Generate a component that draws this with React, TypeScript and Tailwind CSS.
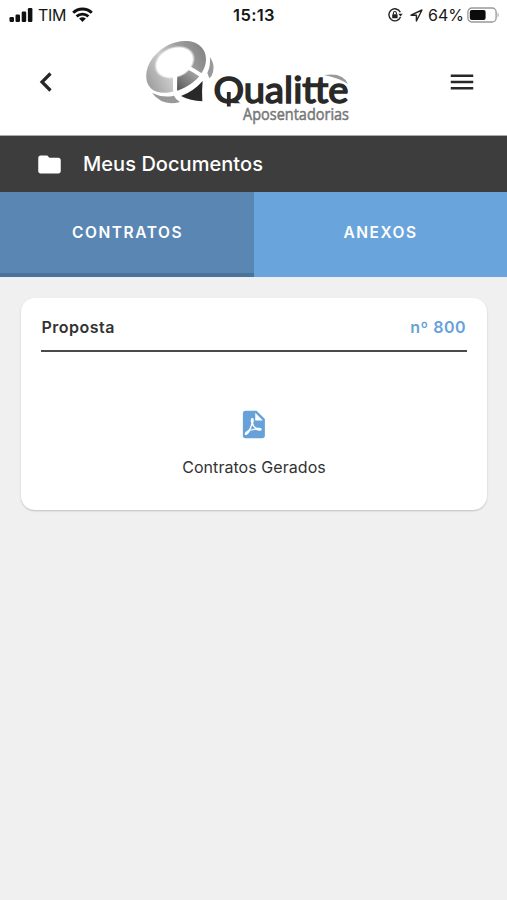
import { MdFolder, MdMenu } from "react-icons/md";

function StatusBar() {
  return (
    <div className="flex h-[30px] items-center justify-between pl-[9px] pr-[7px] text-[16px] text-[#161616]">
      <div className="flex w-[160px] items-center">
        <svg width="24" height="16" viewBox="0 0 24 16" fill="#111">
          <rect x="0.5" y="10" width="4.5" height="5" rx="1.2" />
          <rect x="6.5" y="7.5" width="4.5" height="7.5" rx="1.2" />
          <rect x="12.7" y="4.5" width="4.5" height="10.5" rx="1.2" />
          <rect x="18.9" y="1" width="4.5" height="14" rx="1.2" />
        </svg>
        <span className="ml-[5px] tracking-[-0.3px]">TIM</span>
        <svg className="ml-[6px]" width="21" height="16" viewBox="0 0 21 16" fill="none" stroke="#111" strokeWidth="2.9">
          <path d="M1.2 5.8C6.4 .8 14.6 .8 19.8 5.8" />
          <path d="M4.6 9.4C8 6.3 13 6.3 16.4 9.4" />
          <path d="M7.1 11.5Q10.5 9 13.9 11.5L10.5 15Z" fill="#111" stroke="none" />
        </svg>
      </div>
      <span className="mr-[1px] text-[16.5px] font-semibold tracking-[0.35px]">15:13</span>
      <div className="flex w-[160px] items-center justify-end">
        <svg width="15" height="14" viewBox="0 0 15 14" fill="none" stroke="#222" strokeWidth="1.4">
          <path d="M12.3 4.2A6 6 0 1 0 12.5 9" />
          <path d="M10.3 5.7h4.4l-2.2 2.8z" fill="#222" stroke="none" />
          <rect x="4.2" y="6.3" width="5.4" height="4" rx=".5" fill="#222" stroke="none" />
          <path d="M5.4 6.5V5a1.5 1.5 0 0 1 3 0v1.5" strokeWidth="1.1" />
        </svg>
        <svg className="ml-[7px]" width="13" height="13" viewBox="0 0 13 13" fill="none" stroke="#222" strokeWidth="1.4" strokeLinejoin="round">
          <path d="M12 1L1 6.2H6.4V12Z" />
        </svg>
        <span className="ml-[5px]">64%</span>
        <svg className="ml-[3px]" width="33" height="16" viewBox="0 0 33 16">
          <rect x=".9" y="1" width="28.2" height="14" rx="4" fill="none" stroke="#999" strokeWidth="1.3" />
          <rect x="2.8" y="2.9" width="15.8" height="10.2" rx="2" fill="#0c0c0c" />
          <path d="M30.6 5.3Q32.6 8 30.6 10.7Z" fill="#999" />
        </svg>
      </div>
    </div>
  );
}

function Logo() {
  return (
    <svg width="215" height="95" viewBox="140 35 215 95">
      <defs>
        <linearGradient id="orb" x1="0" y1=".7" x2="1" y2=".25">
          <stop offset="0" stopColor="#a2a2a2" />
          <stop offset=".35" stopColor="#cecece" />
          <stop offset=".65" stopColor="#a0a0a0" />
          <stop offset="1" stopColor="#858585" />
        </linearGradient>
        <linearGradient id="wedge" x1="0" y1="1" x2="1" y2="0">
          <stop offset="0" stopColor="#555" />
          <stop offset="1" stopColor="#bbb" />
        </linearGradient>
        <radialGradient id="glow">
          <stop offset=".86" stopColor="#fff" />
          <stop offset="1" stopColor="#fff" stopOpacity="0" />
        </radialGradient>
      </defs>
      <g transform="translate(140 35.7) scale(.33333)">
        <path d="M19 127C15 72 73 17 134 16C172 15 199 38 198 72C197 113 158 151 103 167C52 181 21 161 19 127Z" fill="url(#orb)" />
        <path d="M111 166L112 120Q140 120 152 98L184 115Q158 148 111 166Z" fill="url(#wedge)" />
        <ellipse cx="104" cy="80" rx="64" ry="47" transform="rotate(-24 104 80)" fill="url(#glow)" />
        <path d="M105 112V160Q106 174 122 182M146 96Q162 104 184 119" fill="none" stroke="#fff" strokeWidth="12" />
        <path d="M210 64Q225 87 219 109Q217 121 208 128L202 112Q212 91 210 64Z" fill="#999" />
        <path d="M36 172Q69 188 102 180Q107 192 120 199Q68 213 36 172Z" fill="#999" />
        <path d="M123 181Q161 167 188 136Q185 164 187 197Q151 196 123 181Z" fill="#292929" />
      </g>
      <path d="M324 75Q343 72 348 84Q339 78 324 75Z" fill="#999" />
      <text x="213.5" y="102.5" textLength="135" lengthAdjust="spacingAndGlyphs" fill="#292929" stroke="#292929" strokeWidth="1.5" fontSize="36" fontWeight="400" fontFamily="Lato, sans-serif">Qualitte</text>
      <path d="M231 103.2H250V112H226V104Z" fill="#fff" />
      <path d="M228.8 92V106.5" stroke="#292929" strokeWidth="3.8" />
      <text x="243" y="119.5" textLength="106" lengthAdjust="spacingAndGlyphs" fill="#777" stroke="#777" strokeWidth=".5" fontSize="15.5" fontWeight="500" fontFamily="'Open Sans', sans-serif">Aposentadorias</text>
    </svg>
  );
}

function PdfIcon() {
  return (
    <svg width="33" height="33" viewBox="0 0 24 24" fill="#67a1d9">
      <path d="M14 9h5.5L14 3.5V9M7 2h8l6 6v12a2 2 0 0 1-2 2H7a2 2 0 0 1-2-2V4a2 2 0 0 1 2-2m4.93 10.44c.41.9.93 1.64 1.53 2.15l.41.32c-.87.16-2.07.44-3.34.93l-.11.04.5-1.04c.45-.87.78-1.66 1.01-2.4m6.48 3.81c.18-.18.27-.41.28-.66.03-.2-.02-.39-.12-.55-.29-.47-1.04-.69-2.28-.69l-1.29.07-.87-.58c-.63-.52-1.2-1.43-1.6-2.56l.04-.14c.33-1.33.64-2.94-.02-3.6a.853.853 0 0 0-.61-.24h-.24c-.37 0-.7.39-.79.77-.37 1.33-.15 2.06.22 3.27v.01c-.25.88-.57 1.9-1.08 2.93l-.96 1.8-.89.49c-1.2.75-1.77 1.59-1.88 2.12-.04.19-.02.36.05.54l.03.05.48.31.44.11c.81 0 1.73-.95 2.97-3.07l.18-.07c1.03-.33 2.31-.56 4.03-.75 1.03.51 2.24.74 3 .74.44 0 .74-.11.91-.3z" />
    </svg>
  );
}

export default function App() {
  return (
    <div className="flex h-[900px] w-[507px] flex-col overflow-hidden bg-[#f0f0f0] font-['Inter',sans-serif] text-[#333]">
      <header className="h-[136px] shrink-0 border-b border-[#aaa] bg-white">
        <StatusBar />
        <div className="flex h-[105px] items-start pl-[38px] pr-[30px]">
          <button className="mt-[41px] h-[22px] w-[16px]" aria-label="Voltar">
            <svg width="16" height="22" viewBox="0 0 16 22" fill="none" stroke="#272727" strokeWidth="3.2">
              <path d="M12.5 2.5L4 11L12.5 19.5" />
            </svg>
          </button>
          <div className="ml-[86px] mt-[5px]"><Logo /></div>
          <button className="ml-auto mt-[37px]" aria-label="Menu"><MdMenu size={30} color="#272727" /></button>
        </div>
      </header>
      <div className="flex h-[56px] shrink-0 items-center bg-[#3d3d3d] pl-[36px] text-white">
        <MdFolder size={27} />
        <h1 className="ml-[20px] text-[20px] font-medium leading-[24px] tracking-[0.05px]">Meus Documentos</h1>
      </div>
      <nav className="flex h-[85px] shrink-0 bg-[#6aa4dc] text-[15.5px] font-semibold tracking-[1.55px] text-white">
        <button className="w-[254px] border-b-4 border-[#4a739b] bg-[#5986b3] pl-[1px] pt-[1px]">CONTRATOS</button>
        <button className="flex-1 border-b-4 border-[#6aa4dc] pt-[1px]">ANEXOS</button>
      </nav>
      <main className="px-[21px] pt-[21px]">
        <section className="mr-[-1px] h-[212px] rounded-[14px] bg-white px-[20px] shadow-[0_1px_2px_rgba(0,0,0,0.2)]">
          <div className="flex h-[54px] items-center justify-between border-b-2 border-[#4b494b] pl-[0.5px] pr-[1px] pt-[6px] text-[16px] font-semibold tracking-[0.5px]">
            <span>Proposta</span>
            <span className="text-[#67a1d9]">nº 800</span>
          </div>
          <div className="flex flex-col items-center pt-[56px]">
            <div className="mr-[4px]"><PdfIcon /></div>
            <span className="mt-[14px] text-[16px] leading-[24px] tracking-[0.05px]">Contratos Gerados</span>
          </div>
        </section>
      </main>
    </div>
  );
}
